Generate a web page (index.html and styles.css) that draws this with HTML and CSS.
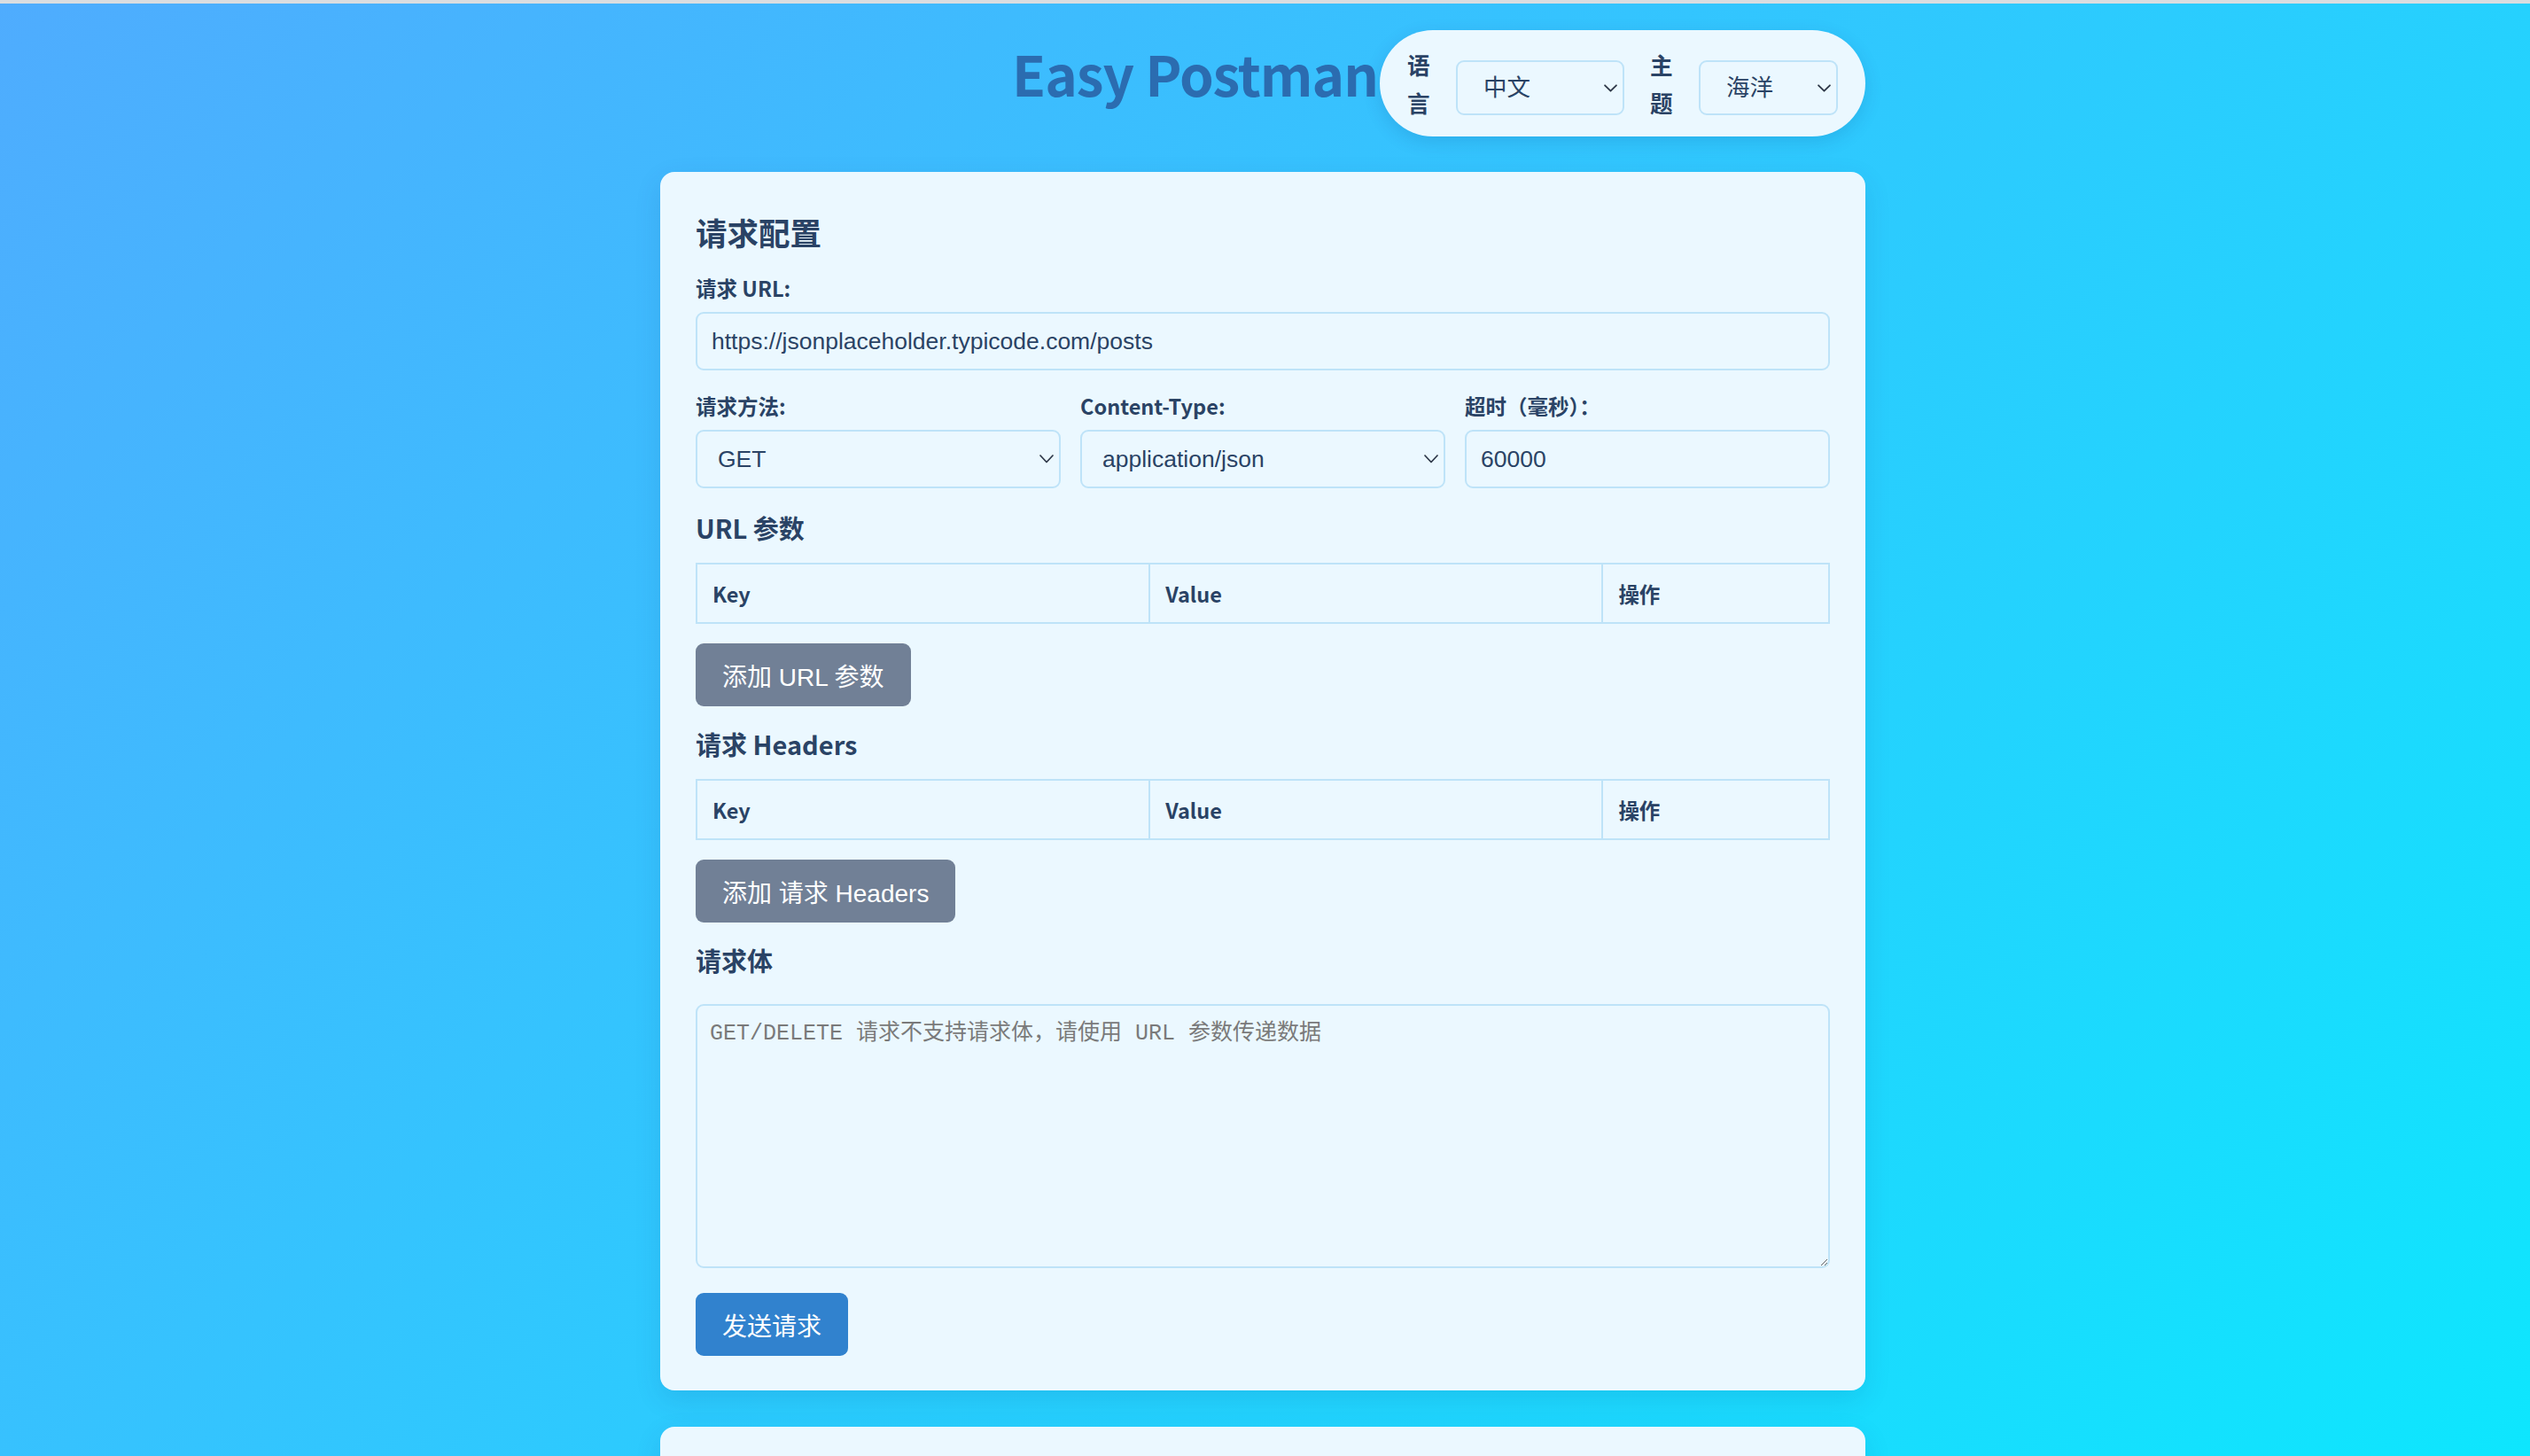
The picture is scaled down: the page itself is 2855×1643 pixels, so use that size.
FILE: index.html
```html
<!DOCTYPE html>
<html lang="zh-CN">
<head>
<meta charset="utf-8">
<title>Easy Postman</title>
<link rel="stylesheet" href="styles.css">
</head>
<body>
<div class="app">
  <header class="topbar">
    <h1 class="brand">Easy Postman</h1>
    <div class="prefs">
      <label class="pref-label" for="lang">语言</label>
      <div class="select-wrap pref-select pref-lang">
        <select id="lang" class="pref-control"><option>中文</option><option>English</option></select>
        <svg class="chev chev-sm" viewBox="0 0 14 8" aria-hidden="true"><polyline points="1,1 7,7 13,1"/></svg>
      </div>
      <label class="pref-label" for="theme">主题</label>
      <div class="select-wrap pref-select pref-theme">
        <select id="theme" class="pref-control"><option>海洋</option><option>森林</option></select>
        <svg class="chev chev-sm" viewBox="0 0 14 8" aria-hidden="true"><polyline points="1,1 7,7 13,1"/></svg>
      </div>
    </div>
  </header>

  <section class="card">
    <h2 class="card-title">请求配置</h2>

    <div class="field">
      <label class="field-label" for="url">请求 URL:</label>
      <input id="url" class="control" type="text" value="https://jsonplaceholder.typicode.com/posts">
    </div>

    <div class="field-row">
      <div class="field">
        <label class="field-label" for="method">请求方法:</label>
        <div class="select-wrap">
          <select id="method" class="control select-control"><option>GET</option><option>POST</option><option>PUT</option><option>DELETE</option></select>
          <svg class="chev" viewBox="0 0 16 10" aria-hidden="true"><polyline points="1,1 8,8.5 15,1"/></svg>
        </div>
      </div>
      <div class="field">
        <label class="field-label" for="ctype">Content-Type:</label>
        <div class="select-wrap">
          <select id="ctype" class="control select-control"><option>application/json</option><option>text/plain</option></select>
          <svg class="chev" viewBox="0 0 16 10" aria-hidden="true"><polyline points="1,1 8,8.5 15,1"/></svg>
        </div>
      </div>
      <div class="field">
        <label class="field-label" for="timeout">超时（毫秒）：</label>
        <input id="timeout" class="control" type="text" value="60000">
      </div>
    </div>

    <h3 class="section-title">URL 参数</h3>
    <table class="kv-table">
      <thead><tr><th class="col-key">Key</th><th class="col-val">Value</th><th class="col-op">操作</th></tr></thead>
      <tbody></tbody>
    </table>
    <div class="actions"><button class="btn btn-secondary" type="button">添加 URL 参数</button></div>

    <h3 class="section-title">请求 Headers</h3>
    <table class="kv-table">
      <thead><tr><th class="col-key">Key</th><th class="col-val">Value</th><th class="col-op">操作</th></tr></thead>
      <tbody></tbody>
    </table>
    <div class="actions"><button class="btn btn-secondary" type="button">添加 请求 Headers</button></div>

    <h3 class="section-title body-title">请求体</h3>
    <textarea class="control body-input" placeholder="GET/DELETE 请求不支持请求体，请使用 URL 参数传递数据"></textarea>
    <button class="btn btn-primary" type="button">发送请求</button>
  </section>

  <section class="card response-card">
    <h2 class="card-title">响应结果</h2>
    <div class="response-box"></div>
  </section>
</div>
</body>
</html>
```

FILE: styles.css
```css
* { box-sizing: border-box; }

body {
  margin: 0;
  border-top: 4px solid #dadde0;
  padding: 30px 5px 53px 0;
  background: linear-gradient(135deg, #4facfe 0%, #00f2fe 100%);
  font-family: "Noto Sans CJK SC", sans-serif;
  color: #2a4365;
}

.app {
  width: 1360px;
  margin: 0 auto;
}

/* ---------- header ---------- */
.topbar {
  display: flex;
  justify-content: flex-end;
  align-items: center;
  margin-bottom: 40px;
}

.brand {
  align-self: flex-start;
  margin: 17px 2px 0 0;
  font-size: 62px;
  line-height: 62px;
  letter-spacing: -1px;
  font-weight: 700;
  color: #2b6cb0;
  white-space: nowrap;
}

.prefs {
  display: flex;
  align-items: center;
  gap: 29px;
  padding: 17px 31px;
  background: #ebf8ff;
  border-radius: 60px;
  box-shadow: 0 6px 20px rgba(0, 50, 110, 0.14);
}

.pref-label {
  width: 26px;
  font-size: 25.6px;
  line-height: 43px;
  font-weight: 700;
  color: #2a4365;
}

.pref-select { margin-top: 10px; }
.pref-lang { width: 190px; }
.pref-theme { width: 157px; }

.pref-control {
  appearance: none;
  -webkit-appearance: none;
  width: 100%;
  height: 62px;
  padding: 0 34px 0 29px;
  border: 2px solid #bee3f8;
  border-radius: 9px;
  background: #ebf8ff;
  color: #2a4365;
  font: 26.5px "Liberation Sans", "Noto Sans CJK SC", sans-serif;
  outline: none;
}

.select-wrap { position: relative; }

.chev {
  position: absolute;
  right: 8px;
  top: 50%;
  width: 16px;
  height: 10px;
  margin-top: -5px;
  fill: none;
  stroke: #2d3748;
  stroke-width: 1.7;
  stroke-linecap: round;
  stroke-linejoin: round;
  pointer-events: none;
}

.chev-sm {
  width: 15px;
  height: 9px;
  margin-top: -4px;
}

/* ---------- card ---------- */
.card {
  background: #ebf8ff;
  border-radius: 16px;
  padding: 40px 40px 39px;
  margin-bottom: 41px;
  box-shadow: 0 10px 30px rgba(0, 60, 120, 0.12);
}

.card-title {
  margin: 0 0 18px;
  font-size: 35.5px;
  line-height: 56px;
  font-weight: 700;
  color: #2a4365;
}

.field { margin-bottom: 23px; }

.field-label {
  display: block;
  margin-bottom: 10px;
  font-size: 23.5px;
  line-height: 34px;
  font-weight: 700;
  color: #2a4365;
}

.field-row {
  display: grid;
  grid-template-columns: repeat(3, 1fr);
  gap: 22px;
  margin-bottom: 24px;
}

.field-row .field { margin-bottom: 0; }

.control {
  display: block;
  width: 100%;
  height: 66px;
  padding: 0 16px;
  border: 2px solid #bee3f8;
  border-radius: 9px;
  background: #ebf8ff;
  color: #2a4365;
  font: 26.5px "Liberation Sans", "Noto Sans CJK SC", sans-serif;
  outline: none;
}

.select-control {
  appearance: none;
  -webkit-appearance: none;
  padding: 0 40px 0 23px;
}

.section-title {
  margin: 0 0 20px;
  font-size: 29px;
  line-height: 40px;
  font-weight: 700;
  color: #2a4365;
}

.kv-table {
  width: 100%;
  table-layout: fixed;
  border-collapse: collapse;
  margin-bottom: 22px;
}

.kv-table th {
  height: 67px;
  padding: 0 17px;
  border: 2px solid #bee3f8;
  text-align: left;
  font-size: 23.5px;
  font-weight: 700;
  color: #2a4365;
}

.col-key, .col-val { width: 40%; }
.col-op { width: 20%; }

.actions { margin-bottom: 22px; }

.btn {
  height: 71px;
  padding: 0 30px;
  border: 0;
  border-radius: 9px;
  color: #ffffff;
  font: 28px "Liberation Sans", "Noto Sans CJK SC", sans-serif;
  cursor: pointer;
}

.btn-secondary { background: #718096; }
.btn-primary { background: #3182ce; }

.body-title { margin-bottom: 30px; }

.body-input {
  height: 298px;
  padding: 14px;
  margin-bottom: 28px;
  font: 25px "Liberation Mono", "Noto Sans CJK SC", monospace;
  line-height: 1.4;
  resize: vertical;
}

.body-input::placeholder { color: #7a7a7a; }

.response-box {
  min-height: 700px;
}
```
